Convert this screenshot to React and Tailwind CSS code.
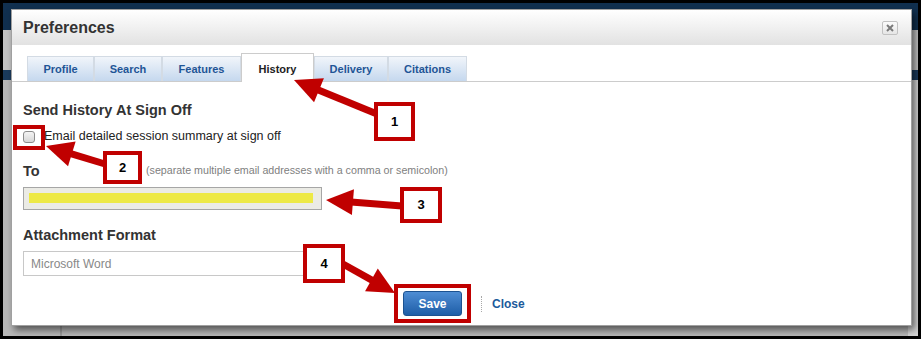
const tabs = [
  { label: 'Profile', w: 'w-[67px]' },
  { label: 'Search', w: 'w-[68px]' },
  { label: 'Features', w: 'w-[79px]' },
  { label: 'History', w: 'w-[73px]', active: true },
  { label: 'Delivery', w: 'w-[74px]' },
  { label: 'Citations', w: 'w-[79px]' },
];

// thick red arrow with a wide head, drawn from tail (x1,y1) to tip (x2,y2)
function Arrow({ x1, y1, x2, y2 }) {
  const len = 27;
  const hw = 13;
  const dx = x2 - x1;
  const dy = y2 - y1;
  const d = Math.hypot(dx, dy);
  const ux = dx / d;
  const uy = dy / d;
  const bx = x2 - ux * len;
  const by = y2 - uy * len;
  const pts = [
    [x2, y2],
    [bx - uy * hw, by + ux * hw],
    [bx + uy * hw, by - ux * hw],
  ]
    .map((p) => p.join(','))
    .join(' ');
  return (
    <g>
      <line x1={x1} y1={y1} x2={bx + ux * 2} y2={by + uy * 2} stroke="#c00000" strokeWidth="7" />
      <polygon points={pts} fill="#c00000" />
    </g>
  );
}

function Callout({ n, className }) {
  return (
    <div
      className={`absolute flex items-center justify-center bg-white border-[4px] border-[#c00000] text-[13px] font-bold text-black ${className}`}
    >
      {n}
    </div>
  );
}

function Tabs() {
  return (
    <div className="mt-[8px] flex items-end pl-[15px] border-b border-[#cccccc]">
      {tabs.map((t) =>
        t.active ? (
          <div
            key={t.label}
            className={`${t.w} h-[29px] -mb-px flex items-center justify-center pt-[3px] bg-white border-x border-t border-[#cccccc] text-[11px] font-bold text-[#222]`}
          >
            {t.label}
          </div>
        ) : (
          <div
            key={t.label}
            className={`${t.w} h-[25px] flex items-center justify-center bg-gradient-to-b from-[#f1f5fa] to-[#c5d8ee] border-x border-t border-[#d3dbe4] text-[11px] font-bold text-[#1f5596]`}
          >
            {t.label}
          </div>
        )
      )}
    </div>
  );
}

function Dialog() {
  return (
    <div className="absolute left-[8px] top-[6px] w-[901px] h-[317px] bg-white border border-[#a0a0a0] shadow-[3px_4px_7px_rgba(0,0,0,0.55)] flex flex-col">
      {/* Header */}
      <div className="h-[35px] flex items-center justify-between pl-[11px] pr-[13px] bg-gradient-to-b from-white to-[#e2e2e2]">
        <h1 className="text-[16px] leading-[18px] font-bold text-[#333]">Preferences</h1>
        <div className="w-[16px] h-[14px] rounded-[2px] border border-[#c2c2c2] bg-gradient-to-b from-[#fbfbfb] to-[#e6e6e6] flex items-center justify-center">
          <svg width="8" height="8" viewBox="0 0 8 8">
            <path d="M1 1L7 7M7 1L1 7" stroke="#7a7a7a" strokeWidth="2" />
          </svg>
        </div>
      </div>

      <Tabs />

      {/* Body */}
      <div className="pl-[11px] flex flex-col">
        <h2 className="mt-[19px] h-[18px] text-[14.5px] leading-[18px] font-bold text-[#333]">
          Send History At Sign Off
        </h2>

        <div className="mt-[9px] h-[16px] flex items-start">
          <span className="mt-[3px] w-[12px] h-[12px] rounded-[3px] border border-[#8c8c8c] bg-gradient-to-b from-[#f4f4f4] to-[#d6d6d6]" />
          <span className="ml-[9px] text-[12.5px] leading-[16px] text-[#222]">
            Email detailed session summary at sign off
          </span>
        </div>

        <div className="mt-[18px] h-[18px] flex items-start">
          <span className="w-[123px] text-[14.5px] leading-[18px] font-bold text-[#333]">To</span>
          <span className="mt-[2px] text-[10.7px] leading-[13px] text-[#808080]">
            (separate multiple email addresses with a comma or semicolon)
          </span>
        </div>

        <div className="mt-[7px] w-[299px] h-[23px] border border-[#a6a6a6] bg-[#ebebe5] pl-[5px] pt-[5px]">
          <div className="w-[284px] h-[10px] bg-[#ede945]" />
        </div>

        <h2 className="mt-[16px] h-[18px] text-[14.5px] leading-[18px] font-bold text-[#333]">
          Attachment Format
        </h2>

        <div className="mt-[7px] w-[299px] h-[25px] border border-[#c8c8c8] bg-white flex items-center pl-[7px] text-[12px] leading-[14px] text-[#888]">
          Microsoft Word
        </div>

        <div className="mt-[15px] flex items-center">
          <button className="ml-[380px] w-[59px] h-[25px] rounded-[3px] border border-[#1c5291] bg-gradient-to-b from-[#4e8dd4] to-[#1d5ea7] text-white text-[12px] font-bold">
            Save
          </button>
          <span className="ml-[19px] h-[16px] border-l border-dotted border-[#a8a8a8]" />
          <span className="ml-[10px] text-[12px] font-bold text-[#1c5a9b]">Close</span>
        </div>
      </div>
    </div>
  );
}

export default function App() {
  return (
    <div className="relative w-[921px] h-[339px] bg-black p-[3px] font-['Liberation_Sans',Arial,sans-serif]">
      <div className="relative w-full h-full overflow-hidden bg-[#b8b8b8] flex flex-col">
        {/* dimmed page behind the dialog */}
        <div className="h-[27px] bg-[#11304f]" />
        <div className="h-[40px] bg-[#c4c4c4]" />
        <div className="h-[10px] bg-[#1b3b5d]" />
        <div className="flex-1 flex">
          <div className="w-[59px] border-r-2 border-[#9c9c9c]" />
          <div className="flex-1" />
          <div className="w-[10px] bg-[#d4d4d4]" />
        </div>
        <Dialog />
      </div>

      {/* annotations */}
      <svg className="absolute left-0 top-0 pointer-events-none" width="921" height="339">
        <Arrow x1={377} y1={114} x2={294} y2={80} />
        <Arrow x1={105} y1={164} x2={46} y2={146} />
        <Arrow x1={402} y1={206} x2={326} y2={200} />
        <Arrow x1={343} y1={264} x2={395} y2={293} />
      </svg>
      <div className="absolute left-[13px] top-[125px] w-[32px] h-[25px] border-[4px] border-[#c00000]" />
      <div className="absolute left-[394px] top-[284px] w-[77px] h-[39px] border-[4px] border-[#c00000]" />
      <Callout n="1" className="left-[374px] top-[102px] w-[41px] h-[39px]" />
      <Callout n="2" className="left-[103px] top-[151px] w-[39px] h-[33px]" />
      <Callout n="3" className="left-[400px] top-[187px] w-[42px] h-[36px]" />
      <Callout n="4" className="left-[303px] top-[244px] w-[42px] h-[39px]" />
    </div>
  );
}
